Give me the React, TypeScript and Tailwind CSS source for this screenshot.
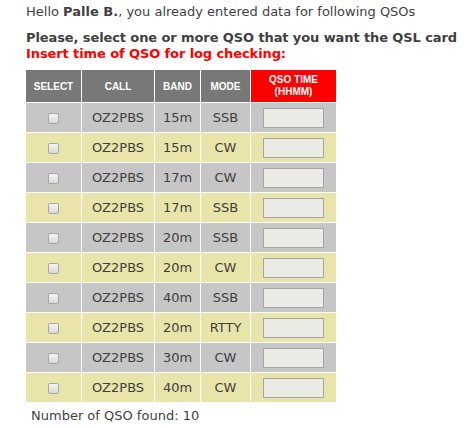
import React from "react";

const rows: [string, string, string][] = [
  ["OZ2PBS", "15m", "SSB"],
  ["OZ2PBS", "15m", "CW"],
  ["OZ2PBS", "17m", "CW"],
  ["OZ2PBS", "17m", "SSB"],
  ["OZ2PBS", "20m", "SSB"],
  ["OZ2PBS", "20m", "CW"],
  ["OZ2PBS", "40m", "SSB"],
  ["OZ2PBS", "20m", "RTTY"],
  ["OZ2PBS", "30m", "CW"],
  ["OZ2PBS", "40m", "CW"],
];

export default function App() {
  return (
    <div className="w-[470px] h-[428px] bg-white text-[#3f3f3f] pl-[26px] pt-[3px] font-['DejaVu_Sans',sans-serif] overflow-hidden">
      <div className="text-[13px] leading-[18px]">
        Hello <b>Palle B.</b>, you already entered data for following QSOs
      </div>
      <div className="mt-[9px] text-[13px] font-bold leading-[16px] tracking-[-0.1px] whitespace-nowrap">
        Please, select one or more QSO that you want the QSL card
      </div>
      <div className="text-[13px] font-bold leading-[16px] tracking-[-0.1px] text-[#ff0000]">
        Insert time of QSO for log checking:
      </div>
      <table className="mt-[8px] border-separate border-spacing-0 table-fixed w-[310px]">
        <colgroup>
          <col className="w-[56px]" />
          <col className="w-[73px]" />
          <col className="w-[46px]" />
          <col className="w-[50px]" />
          <col className="w-[85px]" />
        </colgroup>
        <thead>
          <tr className="h-[33px] font-['Liberation_Sans',sans-serif] text-[10px] text-white">
            <th className="bg-[#787878] border-r border-b border-white font-bold p-0">SELECT</th>
            <th className="bg-[#787878] border-r border-b border-white font-bold p-0">CALL</th>
            <th className="bg-[#787878] border-r border-b border-white font-bold p-0">BAND</th>
            <th className="bg-[#787878] border-r border-b border-white font-bold p-0">MODE</th>
            <th className="bg-[#ff0000] border-b border-white font-bold p-0 leading-[12px]">
              QSO TIME
              <br />
              (HHMM)
            </th>
          </tr>
        </thead>
        <tbody>
          {rows.map((r, i) => {
            const bg = i % 2 === 0 ? "bg-[#c6c6c6]" : "bg-[#e8e4aa]";
            return (
              <tr key={i} className="h-[30px] text-[13px] text-center">
                <td className={`${bg} border-r border-b border-white p-0`}>
                  <span className="inline-block align-middle w-[11px] h-[11px] rounded-[2px] border border-[#a6a6a6] bg-gradient-to-b from-[#f4f4f4] to-[#d8d8d8]" />
                </td>
                <td className={`${bg} border-r border-b border-white p-0`}>{r[0]}</td>
                <td className={`${bg} border-r border-b border-white p-0`}>{r[1]}</td>
                <td className={`${bg} border-r border-b border-white p-0`}>{r[2]}</td>
                <td className={`${bg} border-b border-white p-0`}>
                  <div className="mx-auto w-[61px] h-[20px] bg-[#ebebe6] border border-[#a4a4a4]" />
                </td>
              </tr>
            );
          })}
        </tbody>
      </table>
      <div className="mt-[4px] pl-[5px] text-[13px] leading-[18px]">Number of QSO found: 10</div>
    </div>
  );
}
